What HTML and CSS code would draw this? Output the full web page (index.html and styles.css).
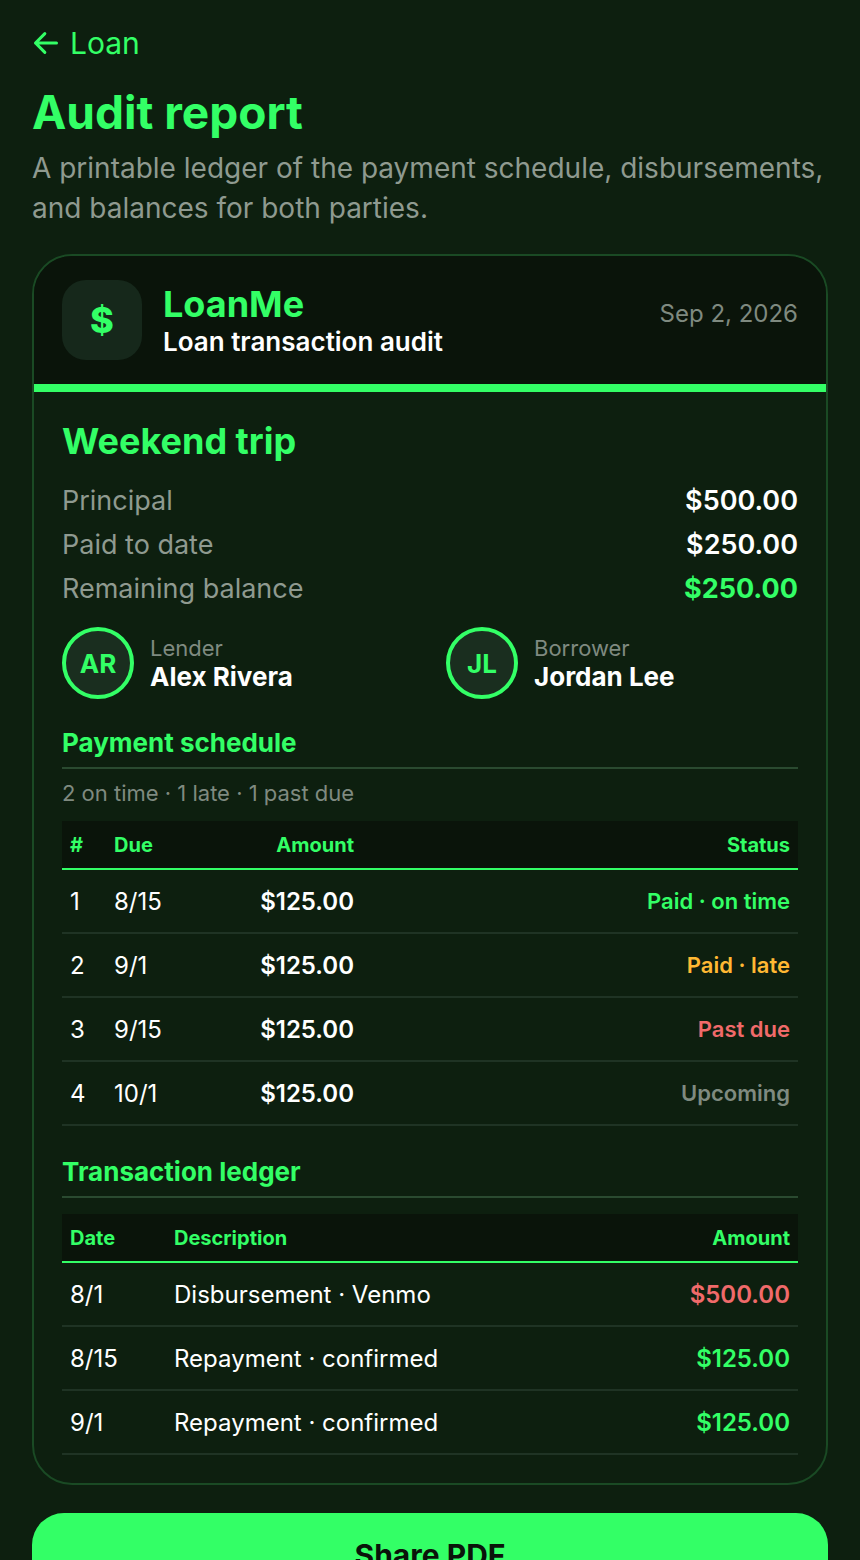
FILE: index.html
```html
<!DOCTYPE html>
<html lang="en">

<head>
    <meta charset="UTF-8">
    <meta name="viewport" content="width=device-width, initial-scale=1.0">
    <title>Audit report</title>
    <link rel="stylesheet" href="styles.css">
</head>

<body>
    <div class="page">
        <a class="back" href="#">
            <svg class="back-icon" viewBox="0 0 24 24" xmlns="http://www.w3.org/2000/svg">
                <path d="M21 12H3M11 4l-8 8 8 8" />
            </svg>
            Loan
        </a>
        <h1 class="title">Audit report</h1>
        <p class="intro">A printable ledger of the payment schedule, disbursements, and balances for both parties.</p>

        <div class="card">
            <div class="card-head">
                <div class="logo">$</div>
                <div class="brand">
                    <div class="brand-name">LoanMe</div>
                    <div class="brand-sub">Loan transaction audit</div>
                </div>
                <div class="head-date">Sep 2, 2026</div>
            </div>

            <div class="card-body">
                <h2 class="loan-name">Weekend trip</h2>
                <div class="sum-row"><span>Principal</span><strong>$500.00</strong></div>
                <div class="sum-row"><span>Paid to date</span><strong>$250.00</strong></div>
                <div class="sum-row"><span>Remaining balance</span><strong class="green">$250.00</strong></div>

                <div class="parties">
                    <div class="party">
                        <div class="avatar">AR</div>
                        <div>
                            <div class="party-role">Lender</div>
                            <div class="party-name">Alex Rivera</div>
                        </div>
                    </div>
                    <div class="party">
                        <div class="avatar">JL</div>
                        <div>
                            <div class="party-role">Borrower</div>
                            <div class="party-name">Jordan Lee</div>
                        </div>
                    </div>
                </div>

                <h3 class="section-title">Payment schedule</h3>
                <div class="section-note">2 on time · 1 late · 1 past due</div>
                <table class="ledger">
                    <colgroup>
                        <col class="col-num">
                        <col class="col-due">
                        <col class="col-amount">
                        <col>
                    </colgroup>
                    <thead>
                        <tr>
                            <th>#</th>
                            <th>Due</th>
                            <th class="right">Amount</th>
                            <th class="right">Status</th>
                        </tr>
                    </thead>
                    <tbody>
                        <tr>
                            <td>1</td>
                            <td>8/15</td>
                            <td class="right money">$125.00</td>
                            <td class="right status green">Paid · on time</td>
                        </tr>
                        <tr>
                            <td>2</td>
                            <td>9/1</td>
                            <td class="right money">$125.00</td>
                            <td class="right status amber">Paid · late</td>
                        </tr>
                        <tr>
                            <td>3</td>
                            <td>9/15</td>
                            <td class="right money">$125.00</td>
                            <td class="right status red">Past due</td>
                        </tr>
                        <tr>
                            <td>4</td>
                            <td>10/1</td>
                            <td class="right money">$125.00</td>
                            <td class="right status gray">Upcoming</td>
                        </tr>
                    </tbody>
                </table>

                <h3 class="section-title section-title-second">Transaction ledger</h3>
                <table class="ledger ledger-second">
                    <colgroup>
                        <col class="col-date">
                        <col>
                        <col class="col-total">
                    </colgroup>
                    <thead>
                        <tr>
                            <th>Date</th>
                            <th>Description</th>
                            <th class="right">Amount</th>
                        </tr>
                    </thead>
                    <tbody>
                        <tr>
                            <td>8/1</td>
                            <td>Disbursement · Venmo</td>
                            <td class="right money red">$500.00</td>
                        </tr>
                        <tr>
                            <td>8/15</td>
                            <td>Repayment · confirmed</td>
                            <td class="right money green">$125.00</td>
                        </tr>
                        <tr>
                            <td>9/1</td>
                            <td>Repayment · confirmed</td>
                            <td class="right money green">$125.00</td>
                        </tr>
                    </tbody>
                </table>
            </div>
        </div>

        <button class="share">Share PDF</button>
    </div>
</body>

</html>
```

FILE: styles.css
```css
html,
body {
    margin: 0;
    height: 100%;
    overflow: hidden;
}

body {
    background-color: #0d1f0f;
    font-family: 'Inter', 'Liberation Sans', sans-serif;
    color: #ffffff;
}

.page {
    height: 100vh;
    box-sizing: border-box;
    padding: 24px 32px 0;
    overflow: hidden;
}

.back {
    display: flex;
    align-items: center;
    gap: 10px;
    height: 38px;
    font-size: 30px;
    line-height: 38px;
    color: #33ff66;
    text-decoration: none;
}

.back-icon {
    width: 28px;
    height: 28px;
    fill: none;
    stroke: #33ff66;
    stroke-width: 2.6;
    stroke-linecap: round;
    stroke-linejoin: round;
}

.title {
    margin: 22px 0 0;
    font-size: 46px;
    line-height: 56px;
    font-weight: 700;
    color: #33ff66;
}

.intro {
    margin: 8px 0 0;
    font-size: 28px;
    line-height: 40px;
    color: #8f9a90;
}

.card {
    margin-top: 26px;
    border: 2px solid #1a4a24;
    border-radius: 40px;
    overflow: hidden;
}

.card-head {
    display: flex;
    align-items: center;
    gap: 21px;
    padding: 24px 28px;
    background-color: #0a140a;
    border-bottom: 8px solid #33ff66;
}

.logo {
    display: flex;
    justify-content: center;
    align-items: center;
    width: 80px;
    height: 80px;
    border-radius: 24px;
    background-color: #16281b;
    color: #33ff66;
    font-size: 36px;
    font-weight: 800;
}

.brand {
    flex: 1;
}

.brand-name {
    font-size: 36px;
    line-height: 44px;
    font-weight: 700;
    color: #33ff66;
}

.brand-sub {
    font-size: 26px;
    line-height: 32px;
    font-weight: 600;
}

.head-date {
    font-size: 24px;
    color: #7f8a80;
    margin-bottom: 14px;
}

.card-body {
    padding: 26px 28px 28px;
}

.loan-name {
    margin: 0 0 14px;
    font-size: 36px;
    line-height: 46px;
    font-weight: 700;
    color: #33ff66;
}

.sum-row {
    display: flex;
    justify-content: space-between;
    align-items: center;
    height: 44px;
    font-size: 27px;
    color: #8f9a90;
}

.sum-row strong {
    font-weight: 600;
    color: #ffffff;
}

.sum-row strong.green {
    font-weight: 700;
    color: #33ff66;
}

.parties {
    display: grid;
    grid-template-columns: 1fr 1fr;
    gap: 32px;
    margin-top: 17px;
}

.party {
    display: flex;
    align-items: center;
    gap: 16px;
}

.avatar {
    display: flex;
    justify-content: center;
    align-items: center;
    width: 72px;
    height: 72px;
    box-sizing: border-box;
    border: 4px solid #33ff66;
    border-radius: 50%;
    background-color: #1a2e1f;
    color: #33ff66;
    font-size: 26px;
    font-weight: 700;
}

.party-role {
    font-size: 22px;
    line-height: 28px;
    color: #7f8a80;
}

.party-name {
    font-size: 26px;
    line-height: 30px;
    font-weight: 700;
}

.section-title {
    margin: 28px 0 0;
    padding-bottom: 8px;
    border-bottom: 2px solid #2a4a30;
    font-size: 26px;
    line-height: 32px;
    font-weight: 700;
    color: #33ff66;
}

.section-title-second {
    margin-top: 30px;
}

.section-note {
    margin: 10px 0 14px;
    font-size: 22px;
    line-height: 28px;
    color: #7f8a80;
}

.ledger {
    width: 100%;
    border-collapse: collapse;
    table-layout: fixed;
}

.ledger-second {
    margin-top: 16px;
}

.col-num {
    width: 44px;
}

.col-due {
    width: 120px;
}

.col-amount {
    width: 136px;
}

.col-date {
    width: 104px;
}

.col-total {
    width: 160px;
}

.ledger th {
    height: 48px;
    padding: 0 8px;
    box-sizing: border-box;
    background-color: #0a140a;
    border-bottom: 2px solid #33ff66;
    font-size: 20px;
    font-weight: 700;
    text-align: left;
    color: #33ff66;
}

.ledger td {
    height: 64px;
    padding: 0 8px;
    box-sizing: border-box;
    border-bottom: 2px solid #1f3324;
    font-size: 24px;
}

.ledger th.right,
.ledger td.right {
    text-align: right;
}

.ledger td.money {
    font-weight: 600;
}

.ledger td.status {
    font-size: 22px;
    font-weight: 600;
}

.green {
    color: #33ff66;
}

.amber {
    color: #ffb833;
}

.red {
    color: #f06a6a;
}

.gray {
    color: #7f8a80;
}

.share {
    display: block;
    width: 100%;
    height: 84px;
    margin-top: 28px;
    border: none;
    border-radius: 32px;
    background-color: #33ff66;
    color: #0a140a;
    font-family: inherit;
    font-size: 30px;
    font-weight: 700;
    cursor: pointer;
}
```
